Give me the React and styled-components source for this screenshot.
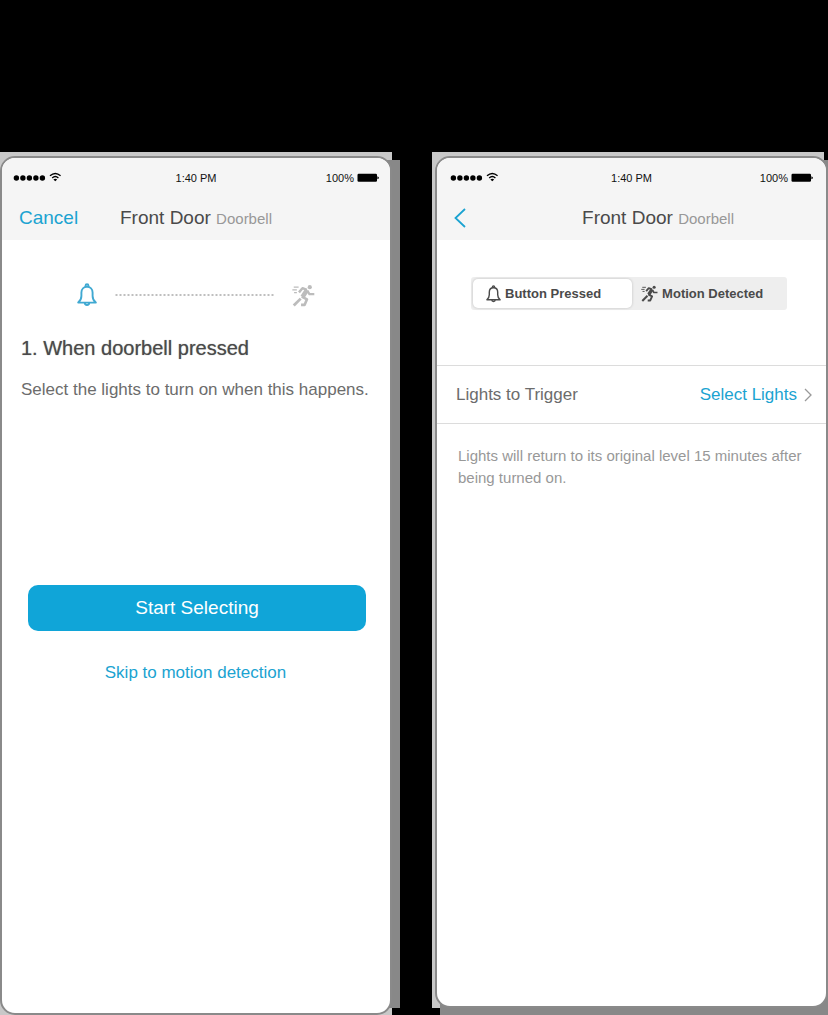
import React from 'react';
import styled, { createGlobalStyle } from 'styled-components';

const accent = '#10a5d8';
const link = '#1ba3d1';
const ink = '#4a4a4a';
const muted = '#989898';

const GlobalStyle = createGlobalStyle`
  * { box-sizing: border-box; }
  body {
    margin: 0;
    background: #000;
    color: ${ink};
    font-family: "Liberation Sans", Arial, sans-serif;
  }
  button { font-family: inherit; border: 0; padding: 0; background: none; cursor: pointer; }
  h1, h2, p { margin: 0; font-weight: 400; }
  svg { display: block; flex: none; }
`;

const Page = styled.main`
  min-height: 100vh;
  padding: 152px 4px 0 0;
  display: grid;
  grid-template-columns: 1fr 1fr;
  gap: 40px;
  overflow: hidden;
`;

const Frame = styled.div`
  position: relative;
  display: flex;
  background: #c8c8c8;
  padding-top: 4px;
  padding-left: ${(p) => (p.$inset ? '3px' : '0')};
  margin-bottom: ${(p) => (p.$inset ? '7px' : '0')};

  &::before {
    content: '';
    position: absolute;
    inset: ${(p) => (p.$inset ? '8px -8px -8px 8px' : '8px -8px 7px 8px')};
    background: #888;
  }
`;

const Phone = styled.section`
  position: relative;
  flex: 1;
  min-width: 0;
  margin-right: ${(p) => (p.$wide ? '-4px' : '0')};
  background: #fff;
  border: 2px solid #8a8a8a;
  border-radius: 15px;
  overflow: hidden;
`;

const TopBar = styled.header`
  background: #f5f5f5;
`;

const Status = styled.div`
  display: grid;
  grid-template-columns: 1fr auto 1fr;
  align-items: center;
  height: 40px;
  padding: 0 ${(p) => (p.$wide ? '13px' : '11px')};
  font-size: 11px;
  line-height: 16px;
  color: #111;
`;

const StatusGroup = styled.div`
  display: flex;
  align-items: center;
  gap: 3px;
  justify-content: ${(p) => (p.$end ? 'flex-end' : 'flex-start')};
`;

const Nav = styled.nav`
  display: grid;
  grid-template-columns: ${(p) => (p.$end ? '1fr auto 75px' : '1fr auto 1fr')};
  align-items: center;
  height: 42px;
  padding: 0 17px 2px;
`;

const NavButton = styled.button`
  justify-self: start;
  font-size: 19px;
  line-height: 24px;
  color: ${link};
`;

const Title = styled.h1`
  font-size: 19px;
  line-height: 24px;
  white-space: nowrap;
`;

const Kind = styled.span`
  font-size: 15px;
  color: ${muted};
`;

const Body = styled.div`
  display: flex;
  flex-direction: column;
  padding: 43px 20px 40px 19px;
`;

const Steps = styled.div`
  display: flex;
  align-items: center;
  justify-content: center;
  gap: 18px;
  height: 24px;
`;

const Heading = styled.h2`
  margin-top: 29px;
  font-size: 20px;
  line-height: 24px;
  text-shadow: 0 0 1px #8a8a8a;
`;

const Lead = styled.p`
  margin-top: 18px;
  font-size: 17px;
  line-height: 24px;
  color: #6c6c6c;
  white-space: nowrap;
`;

const Primary = styled.button`
  margin: 183px 4px 0 7px;
  height: 46px;
  border-radius: 10px;
  background: ${accent};
  color: #fff;
  font-size: 19px;
`;

const TextButton = styled.button`
  align-self: center;
  margin-top: 30px;
  font-size: 17px;
  line-height: 24px;
  color: ${link};
`;

const Segments = styled.div`
  display: grid;
  grid-template-columns: 51fr 49fr;
  height: 33px;
  margin: 37px 39px 0 34px;
  padding: 2px;
  background: #eee;
  border-radius: 3px;
`;

const Segment = styled.button`
  display: flex;
  align-items: center;
  gap: 4px;
  padding-left: ${(p) => (p.$on ? '13px' : '9px')};
  border-radius: 5px;
  background: ${(p) => (p.$on ? '#fff' : 'transparent')};
  box-shadow: ${(p) => (p.$on ? '0 0 3px rgba(0, 0, 0, 0.2)' : 'none')};
  color: ${ink};
  font-size: 13px;
  font-weight: 700;
  line-height: 18px;
  white-space: nowrap;
`;

const Setting = styled.div`
  display: flex;
  align-items: center;
  justify-content: space-between;
  height: 59px;
  margin-top: 55px;
  padding: 0 14px 0 19px;
  border: 1px solid #dcdcdc;
  border-width: 1px 0;
  font-size: 17px;
  color: #6c6c6c;
`;

const SettingButton = styled.button`
  display: flex;
  align-items: center;
  gap: 7px;
  font-size: 17px;
  line-height: 24px;
  color: ${link};
`;

const Note = styled.p`
  margin: 21px 21px 0;
  font-size: 15px;
  line-height: 22px;
  color: ${muted};
`;

const Signal = () => (
  <svg width="48" height="12" viewBox="0 0 48 12" aria-hidden="true">
    {[3.4, 9.9, 16.4, 22.9, 29.4].map((x) => (
      <circle key={x} cx={x} cy="6" r="2.7" />
    ))}
    <g fill="none" stroke="#000" strokeWidth="1.4">
      <path d="M37 3.8Q42.3 -1 47.6 3.8" />
      <path d="M39.2 6Q42.3 3.2 45.4 6" />
    </g>
    <path d="M40.4 7.4Q42.3 6 44.2 7.4L42.3 9.3Z" />
  </svg>
);

const Battery = () => (
  <svg width="22" height="10" viewBox="0 0 22 10" aria-hidden="true">
    <rect x=".5" y=".8" width="19.5" height="8" rx="1.2" />
    <path d="M20.4 3.3Q21.9 3.8 21.9 4.8T20.4 6.3Z" />
  </svg>
);

const Bell = ({ size, color }) => (
  <svg width={size} height={size * 1.2} viewBox="0 0 20 24" fill="none" stroke={color} strokeWidth="1.9" strokeLinejoin="round" aria-hidden="true">
    <path d="M1.2 19.6C3.4 17.8 4.4 16 4.4 13V9.6C4.4 6 6.8 3.7 10 3.7S15.6 6 15.6 9.6V13C15.6 16 16.6 17.8 18.8 19.6Z" />
    <path d="M8.6 3.8V2.6A1.4 1.4 0 0 1 11.4 2.6V3.8M7.8 19.8A2.2 2.2 0 0 0 12.2 19.8" />
  </svg>
);

const Runner = ({ size, color }) => (
  <svg width={size} height={size} viewBox="0 0 66 66" fill="none" stroke={color} strokeLinejoin="round" aria-hidden="true">
    <circle cx="51" cy="9" r="6" fill={color} stroke="none" />
    <path d="M20 24L30 12L43 17" strokeWidth="7" />
    <path d="M43 17L30 37" strokeWidth="13" />
    <path d="M44 19L50 29H64" strokeWidth="6.5" />
    <path d="M28 36L43 44L36 60H26" strokeWidth="7.5" />
    <path d="M25 42L5 62" strokeWidth="8" />
    <path d="M5 9H19M1 17H14M6 25H14" strokeWidth="3.5" />
  </svg>
);

const Dots = () => (
  <svg width="159" height="4" viewBox="0 0 159 4" aria-hidden="true">
    <path d="M.5 2H158.5" stroke="#aaa" strokeWidth="1.6" strokeDasharray="2 2" />
  </svg>
);

const Chevron = ({ width, height, d, color, weight }) => (
  <svg width={width} height={height} viewBox={`0 0 ${width} ${height}`} fill="none" stroke={color} strokeWidth={weight} aria-hidden="true">
    <path d={d} />
  </svg>
);

const StatusBar = ({ wide }) => (
  <Status $wide={wide}>
    <StatusGroup><Signal /></StatusGroup>
    <span>1:40 PM</span>
    <StatusGroup $end>100% <Battery /></StatusGroup>
  </Status>
);

const DeviceTitle = () => (
  <Title>Front Door <Kind>Doorbell</Kind></Title>
);

export default function App() {
  return (
    <>
      <GlobalStyle />
      <Page>
        <Frame>
          <Phone>
            <TopBar>
              <StatusBar />
              <Nav>
                <NavButton type="button">Cancel</NavButton>
                <DeviceTitle />
              </Nav>
            </TopBar>
            <Body>
              <Steps>
                <Bell size={20} color="#40a9d2" />
                <Dots />
                <Runner size={23} color="#bcbcbc" />
              </Steps>
              <Heading>1. When doorbell pressed</Heading>
              <Lead>Select the lights to turn on when this happens.</Lead>
              <Primary type="button">Start Selecting</Primary>
              <TextButton type="button">Skip to motion detection</TextButton>
            </Body>
          </Phone>
        </Frame>
        <Frame $inset>
          <Phone $wide>
            <TopBar>
              <StatusBar wide />
              <Nav $end>
                <NavButton type="button" aria-label="Back">
                  <Chevron width={12} height={20} d="M11 1L1.5 10L11 19" color={link} weight="1.8" />
                </NavButton>
                <DeviceTitle />
              </Nav>
            </TopBar>
            <Segments>
              <Segment type="button" $on aria-pressed="true">
                <Bell size={15} color={ink} />Button Pressed
              </Segment>
              <Segment type="button" aria-pressed="false">
                <Runner size={17} color={ink} />Motion Detected
              </Segment>
            </Segments>
            <Setting>
              <span>Lights to Trigger</span>
              <SettingButton type="button">
                Select Lights
                <Chevron width={8} height={14} d="M1 1L7 7L1 13" color="#999" weight="1.3" />
              </SettingButton>
            </Setting>
            <Note>Lights will return to its original level 15 minutes after being turned on.</Note>
          </Phone>
        </Frame>
      </Page>
    </>
  );
}
